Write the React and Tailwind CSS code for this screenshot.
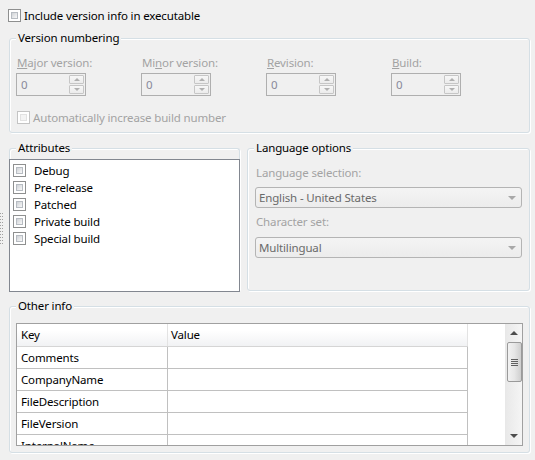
import React from "react";

function CheckBox({ disabled }) {
  return (
    <div
      className={`w-[13px] h-[13px] shrink-0 border p-[2px] bg-white ${
        disabled ? "border-[#c4c4c4]" : "border-[#8e8f8f]"
      }`}
    >
      <div
        className={`w-full h-full border ${
          disabled
            ? "border-[#e2e2e2] bg-[#f4f4f4]"
            : "border-[#b7bcc2] bg-gradient-to-br from-[#cfd2d6] to-[#f8f8f8]"
        }`}
      />
    </div>
  );
}

function Group({ title, className, children }) {
  return (
    <div
      className={`relative border border-[#d5dfe5] rounded-[3px] shadow-[inset_1px_1px_0_#ffffff,1px_1px_0_#ffffff] ${className}`}
    >
      <span className="absolute left-[6px] -top-[9px] px-[2px] bg-[#f0f0f0] leading-[16px] text-black">
        {title}
      </span>
      {children}
    </div>
  );
}

function SpinBox() {
  return (
    <div className="w-[70px] h-[23px] border border-[#afafaf] bg-[#f0f0f0] flex items-center pl-[4px] pr-[1px]">
      <span className="flex-1 text-[#8a8a9a] leading-[15px]">0</span>
      <div className="flex flex-col gap-[1px]">
        {[0, 1].map((i) => (
          <div
            key={i}
            className="w-[15px] h-[9px] border border-[#c6c6c6] rounded-[1px] bg-gradient-to-b from-[#f7f7f7] to-[#ececec] flex items-center justify-center"
          >
            <div
              className={`w-0 h-0 border-l-[3px] border-r-[3px] border-l-transparent border-r-transparent ${
                i === 0
                  ? "border-b-[3px] border-b-[#b0b0b0]"
                  : "border-t-[3px] border-t-[#b0b0b0]"
              }`}
            />
          </div>
        ))}
      </div>
    </div>
  );
}

function Combo({ value }) {
  return (
    <div className="w-[267px] h-[21px] border border-[#b4b4b4] rounded-[3px] bg-gradient-to-b from-[#f4f4f4] to-[#ececec] flex items-center pl-[3px] pr-[5px]">
      <span className="flex-1 text-[#6a6a6a] leading-[15px]">{value}</span>
      <div className="w-0 h-0 border-l-[4px] border-r-[4px] border-t-[4px] border-l-transparent border-r-transparent border-t-[#a8a8a8]" />
    </div>
  );
}

const versionFields = [
  { pre: "", key: "M", post: "ajor version:" },
  { pre: "Mi", key: "n", post: "or version:" },
  { pre: "", key: "R", post: "evision:" },
  { pre: "", key: "B", post: "uild:" },
];

const attributes = ["Debug", "Pre-release", "Patched", "Private build", "Special build"];

const infoRows = ["Comments", "CompanyName", "FileDescription", "FileVersion", "InternalName"];

export default function App() {
  return (
    <div
      className="w-[535px] h-[460px] overflow-hidden bg-[#f0f0f0] text-[11.5px] tracking-[-0.15px] text-black"
      style={{ fontFamily: '"Noto Sans", "Open Sans", sans-serif' }}
    >
      {/* Include checkbox */}
      <div className="pt-[9px] pl-[8px] flex items-center gap-[3px] h-[22px]">
        <CheckBox />
        <span className="leading-[13px]">Include version info in executable</span>
      </div>

      {/* Version numbering */}
      <Group title="Version numbering" className="mt-[16px] ml-[9px] w-[521px] h-[95px] pt-[16px] pl-[6px]">
        <div className="grid grid-cols-[125px_125px_125px_125px]">
          {versionFields.map((f, i) => (
            <div key={i}>
              <div className="pl-[1px] h-[16px] leading-[16px] text-[#a3a3a3]">
                {f.pre}
                <span className="underline">{f.key}</span>
                {f.post}
              </div>
              <div className="mt-[2px]">
                <SpinBox />
              </div>
            </div>
          ))}
        </div>
        <div className="mt-[15px] pl-[1px] flex items-center gap-[3px]">
          <CheckBox disabled />
          <span className="text-[#a3a3a3] leading-[13px]">Automatically increase build number</span>
        </div>
      </Group>

      {/* Attributes + Language options */}
      <div className="mt-[15px] flex">
        <div className="w-[9px] pt-[65px]">
          <svg width="4" height="34" viewBox="0 0 4 34">
            {Array.from({ length: 11 }).map((_, r) =>
              [0, 2].map((c) => (
                <rect key={`${r}-${c}`} x={c} y={r * 3} width="1" height="1" fill="#a0a0a0" />
              ))
            )}
          </svg>
        </div>
        <Group title="Attributes" className="w-[231px] h-[143px] border-b-0 pt-[10px]">
          <div className="-mx-[1px] h-[133px] border border-[#828790] bg-white pt-[2px] pl-[3px]">
            {attributes.map((a) => (
              <div key={a} className="h-[17px] flex items-center">
                <CheckBox />
                <span className="ml-[8px] leading-[15px]">{a}</span>
              </div>
            ))}
          </div>
        </Group>
        <Group title="Language options" className="ml-[7px] w-[283px] h-[143px] pt-[16px] pl-[7px]">
          <div className="pl-[1px] h-[16px] leading-[16px] text-[#a3a3a3]">Language selection:</div>
          <div className="mt-[6px]">
            <Combo value="English - United States" />
          </div>
          <div className="mt-[6px] pl-[1px] h-[16px] leading-[16px] text-[#a3a3a3]">Character set:</div>
          <div className="mt-[7px]">
            <Combo value="Multilingual" />
          </div>
        </Group>
      </div>

      {/* Other info */}
      <Group title="Other info" className="mt-[15px] ml-[9px] w-[521px] h-[147px] pt-[16px] pl-[6px]">
        <div className="w-[507px] h-[123px] border border-[#a0a0a0] bg-white flex overflow-hidden">
          <div className="w-[488px]">
            <div className="flex h-[23px] border-b border-[#d5d5d5] w-[451px] bg-gradient-to-b from-white from-30% to-[#f1f2f4]">
              <div className="w-[151px] border-r border-[#e3e3e3] pl-[4px] flex items-center">Key</div>
              <div className="w-[300px] border-r border-[#e3e3e3] pl-[3px] flex items-center">Value</div>
            </div>
            {infoRows.map((r) => (
              <div key={r} className="flex h-[22px] w-[451px]">
                <div className="w-[151px] border-r border-b border-[#c0c0c0] pl-[4px] flex items-center">{r}</div>
                <div className="w-[300px] border-r border-b border-[#c0c0c0]" />
              </div>
            ))}
          </div>
          {/* scrollbar */}
          <div className="w-[17px] h-full border-l border-[#e8e8e8] bg-gradient-to-r from-[#e9e9e9] to-[#f5f5f5] flex flex-col items-center">
            <div className="h-[18px] flex items-center justify-center">
              <div className="w-0 h-0 border-l-[4px] border-r-[4px] border-b-[4px] border-l-transparent border-r-transparent border-b-[#4d4d4d]" />
            </div>
            <div className="w-[15px] h-[40px] border border-[#9a9a9a] rounded-[2px] bg-gradient-to-r from-[#f2f2f2] via-[#e6e6e6] to-[#cfcfcf] flex flex-col items-center justify-center gap-[1px]">
              <div className="w-[7px] h-[1px] bg-[#606060]" />
              <div className="w-[7px] h-[1px] bg-[#606060]" />
              <div className="w-[7px] h-[1px] bg-[#606060]" />
              <div className="w-[7px] h-[1px] bg-[#606060]" />
            </div>
            <div className="flex-1" />
            <div className="h-[18px] flex items-center justify-center">
              <div className="w-0 h-0 border-l-[4px] border-r-[4px] border-t-[4px] border-l-transparent border-r-transparent border-t-[#4d4d4d]" />
            </div>
          </div>
        </div>
      </Group>
    </div>
  );
}
